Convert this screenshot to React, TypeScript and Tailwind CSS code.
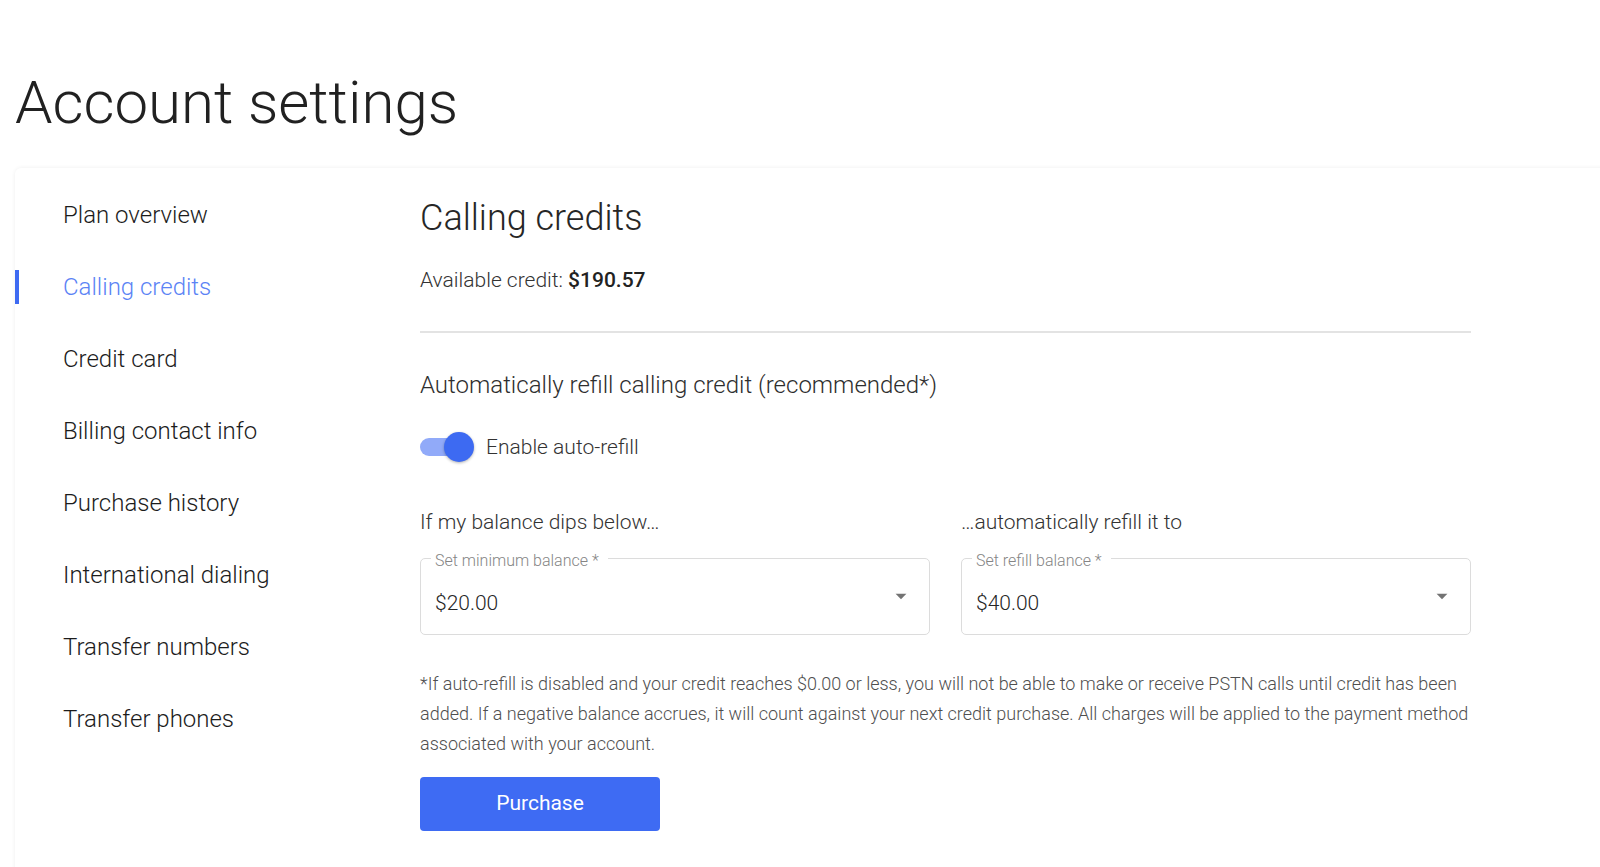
import React, { useState } from 'react';

const navItems = [
    'Plan overview',
    'Calling credits',
    'Credit card',
    'Billing contact info',
    'Purchase history',
    'International dialing',
    'Transfer numbers',
    'Transfer phones',
];

interface BalanceSelectProps {
    heading: string;
    label: string;
    value: string;
}

const BalanceSelect: React.FC<BalanceSelectProps> = ({ heading, label, value }) => {
    return (
        <div>
            <p className="text-[21px] leading-[28px] font-light text-[#333333]">{heading}</p>
            <div className="relative mt-[22px] h-[77px] rounded-[5px] border border-[#dcdcdc] flex justify-between pl-[14px] pr-[15px]">
                {/* notched label sitting on the border */}
                <span className="absolute left-[10px] top-[-6px] bg-white pl-[4px] pr-[9px] text-[16px] leading-[16px] font-light text-[#858585]">{label}</span>
                <span className="mt-[30px] text-[21px] leading-[28px] font-light text-[#262626]">{value}</span>
                <svg className="mt-[24px] w-[26px] h-[26px] text-[#737373]" viewBox="0 0 24 24" fill="currentColor">
                    <path d="M7 10l5 5 5-5z" />
                </svg>
            </div>
        </div>
    );
};

const App: React.FC = () => {
    const [active, setActive] = useState('Calling credits');
    const [autoRefill, setAutoRefill] = useState(true);

    return (
        <div className="w-full h-[867px] overflow-hidden bg-white font-['Roboto',sans-serif] pl-[15px]">
            <h1 className="pt-[67px] text-[60px] leading-[72px] font-light text-[#212121]">Account settings</h1>

            <div className="mt-[29px] w-[1640px] h-[760px] rounded-[6px] bg-white shadow-[0_0_4px_rgba(0,0,0,0.07)] flex">
                {/* Sidebar */}
                <nav className="w-[405px] shrink-0 pt-[11px]">
                    {navItems.map(item => (
                        <button
                            key={item}
                            onClick={() => setActive(item)}
                            className="relative flex items-center w-full h-[72px] pl-[48px] text-left text-[24px] leading-[32px] font-light"
                        >
                            {active === item && <span className="absolute left-0 top-[19px] w-[4px] h-[34px] bg-[#3d6af2]" />}
                            <span className={active === item ? 'text-[#5b83f5]' : 'text-[#1c1c1c]'}>{item}</span>
                        </button>
                    ))}
                </nav>

                {/* Main panel */}
                <div className="w-[1051px] pt-[30px]">
                    <h2 className="text-[36px] leading-[40px] font-light text-[#262626]">Calling credits</h2>
                    <p className="mt-[28px] text-[21px] leading-[28px] font-light text-[#333333]">
                        Available credit: <span className="font-medium text-[#222222]">$190.57</span>
                    </p>
                    <div className="mt-[37px] h-[2px] bg-[#e3e3e3]" />

                    <h3 className="mt-[36px] text-[24px] leading-[32px] font-light text-[#2e2e2e]">Automatically refill calling credit (recommended*)</h3>
                    <div className="mt-[31px] flex items-center gap-[12px] h-[30px]">
                        <button onClick={() => setAutoRefill(!autoRefill)} className="relative w-[54px] h-[30px] flex items-center">
                            <span className={`w-[50px] h-[18px] rounded-full ${autoRefill ? 'bg-[#91aaf9]' : 'bg-[#c4c4c4]'}`} />
                            <span className={`absolute top-0 w-[30px] h-[30px] rounded-full shadow-[0_1px_3px_rgba(0,0,0,0.3)] ${autoRefill ? 'right-0 bg-[#3d6af2]' : 'left-0 bg-[#fafafa]'}`} />
                        </button>
                        <span className="text-[21px] leading-[28px] font-light text-[#333333]">Enable auto-refill</span>
                    </div>

                    <div className="mt-[46px] grid grid-cols-2 gap-[31px]">
                        <BalanceSelect heading="If my balance dips below…" label="Set minimum balance *" value="$20.00" />
                        <BalanceSelect heading="…automatically refill it to" label="Set refill balance *" value="$40.00" />
                    </div>

                    <p className="mt-[34px] text-[18px] leading-[30px] font-light text-[#4f4f4f]">
                        *If auto-refill is disabled and your credit reaches $0.00 or less, you will not be able to make or receive PSTN calls until credit has been added. If a negative balance accrues, it will count against your next credit purchase. All charges will be applied to the payment method associated with your account.
                    </p>

                    <button className="mt-[18px] w-[240px] h-[54px] rounded-[4px] bg-[#3e6bf3] text-white text-[21px]">Purchase</button>
                </div>
            </div>
        </div>
    );
};

export default App;
